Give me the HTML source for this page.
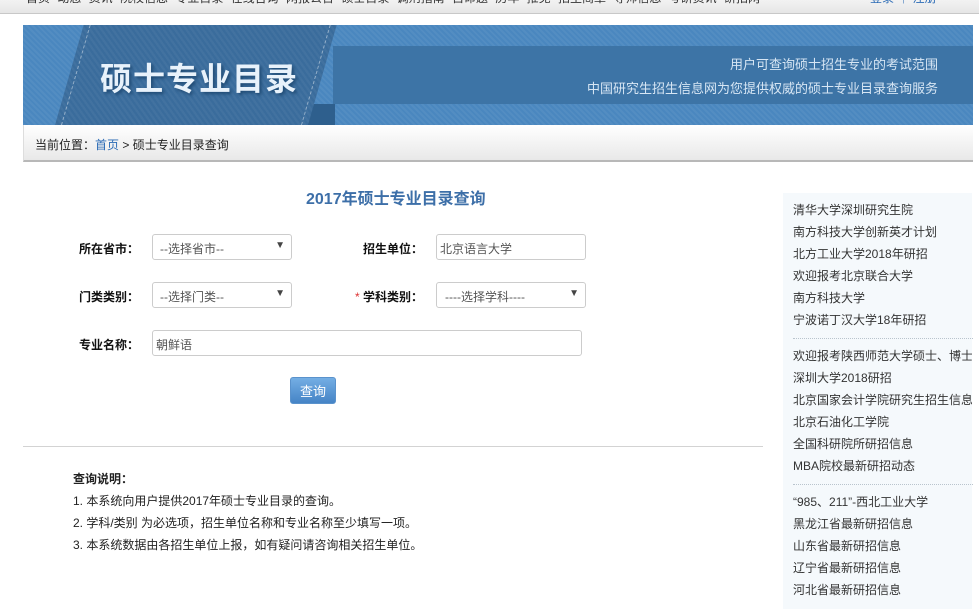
<!DOCTYPE html>
<html><head><meta charset="utf-8">
<style>
*{margin:0;padding:0;box-sizing:border-box}
body{width:979px;height:609px;overflow:hidden;background:#fff;font-family:"Liberation Sans","Noto Sans CJK SC",sans-serif;font-size:12px;color:#333;position:relative}
.top{position:absolute;left:0;top:0;width:979px;height:14px;background:linear-gradient(#f2f2f2,#e6e6e6);border-bottom:1px solid #c8c8c8;overflow:hidden}
.top .nav{position:absolute;left:26px;top:-11px;font-size:12px;color:#333;white-space:nowrap;word-spacing:4px}
.top .r{position:absolute;left:870px;top:-11px;color:#2a6ab5;white-space:nowrap}
.banner{position:absolute;left:23px;top:25px;width:950px;height:100px;background:#4a87bf;overflow:hidden;
background-image:repeating-linear-gradient(45deg,rgba(255,255,255,.05) 0 2px,transparent 2px 4px)}
.band{position:absolute;left:310px;top:21px;width:640px;height:58px;background:#3d74a6}
.rib{position:absolute;left:32px;top:0;width:253px;height:100px;background:#3a6c9c;transform:skewX(-16deg);transform-origin:0 100%;
background-image:repeating-linear-gradient(45deg,rgba(255,255,255,.04) 0 2px,transparent 2px 4px)}
.rib:before,.rib:after{content:"";position:absolute;top:0;bottom:0;border-left:1px dashed rgba(255,255,255,.45)}
.rib:before{left:6px}.rib:after{right:6px}
.shadow{position:absolute;left:284px;top:79px;width:28px;height:21px;background:#2e5f8d}
.title{position:absolute;left:77px;top:29px;font-size:32px;font-weight:bold;color:#e8f2fb;text-shadow:2px 2px 3px #1f4a73;letter-spacing:1px}
.sub{position:absolute;right:35px;color:#d7e6f4;font-size:13px;text-align:right}
.crumb{position:absolute;left:23px;top:125px;width:950px;height:37px;background:linear-gradient(#fff,#e8e8e8);border-bottom:2px solid #b8b8b8;border-left:1px solid #ddd;padding:11px 0 0 11px;font-size:12px;color:#222}
.crumb a{color:#2a6ab5;text-decoration:none}
h2{position:absolute;left:306px;top:185px;font-size:16px;color:#3d6fa8;font-weight:bold}
.lab{position:absolute;font-weight:bold;font-size:12px;color:#111}
.sel,.inp{position:absolute;height:26px;border:1px solid #ccc;border-radius:3px;background:#fff;padding:5px 0 0 7px;color:#555;font-size:12px}
.sel:after{content:"▼";position:absolute;right:6px;top:5px;font-size:10px;color:#444}
.btn{position:absolute;left:290px;top:377px;width:46px;height:27px;border-radius:3px;background:linear-gradient(#74aee4,#4584c6);color:#fff;font-size:13px;text-align:center;line-height:27px;border:1px solid #5a92cc}
.hr{position:absolute;left:23px;top:446px;width:740px;height:1px;background:#d3d3d3}
.note{position:absolute;left:73px;top:468px;font-size:12px;line-height:22px;color:#222}
.side{position:absolute;left:783px;top:193px;width:189px;height:416px;background:#f5f9fc;padding-left:10px}
.side div{font-size:12px;line-height:22px;color:#333;white-space:nowrap;overflow:hidden}
.side .sep{height:1px;border-top:1px dotted #b9c4cd;margin:7px 0 6px;width:180px}
</style></head><body>
<div class="top"><div class="nav">首页 动态 资讯 院校信息 专业目录 在线咨询 网报公告 硕士目录 调剂指南 自命题 历年 推免 招生简章 导师信息 考研资讯 研招网</div><div class="r">登录 ｜ 注册</div></div>
<div class="banner">
<div class="band"></div><div class="shadow"></div><div class="rib"></div>
<div class="title">硕士专业目录</div>
<div class="sub" style="top:29px">用户可查询硕士招生专业的考试范围</div>
<div class="sub" style="top:53px">中国研究生招生信息网为您提供权威的硕士专业目录查询服务</div>
</div>
<div class="crumb">当前位置：<a>首页</a> &gt; 硕士专业目录查询</div>
<h2>2017年硕士专业目录查询</h2>
<div class="lab" style="left:79px;top:240px">所在省市：</div>
<div class="sel" style="left:152px;top:234px;width:140px">--选择省市--</div>
<div class="lab" style="left:363px;top:240px">招生单位：</div>
<div class="inp" style="left:436px;top:234px;width:150px;padding-left:3px">北京语言大学</div>
<div class="lab" style="left:79px;top:288px">门类类别：</div>
<div class="sel" style="left:152px;top:282px;width:140px">--选择门类--</div>
<div class="lab" style="left:355px;top:288px"><span style="color:#d33;font-weight:normal">*</span> 学科类别：</div>
<div class="sel" style="left:436px;top:282px;width:150px;padding-left:8px">----选择学科----</div>
<div class="lab" style="left:79px;top:336px">专业名称：</div>
<div class="inp" style="left:152px;top:330px;width:430px;padding-left:3px">朝鲜语</div>
<div class="btn">查询</div>
<div class="hr"></div>
<div class="note"><b>查询说明：</b><br>1. 本系统向用户提供2017年硕士专业目录的查询。<br>2. 学科/类别 为必选项，招生单位名称和专业名称至少填写一项。<br>3. 本系统数据由各招生单位上报，如有疑问请咨询相关招生单位。</div>
<div class="side" style="padding-top:6px">
<div>清华大学深圳研究生院</div><div>南方科技大学创新英才计划</div><div>北方工业大学2018年研招</div><div>欢迎报考北京联合大学</div><div>南方科技大学</div><div>宁波诺丁汉大学18年研招</div>
<div class="sep"></div>
<div>欢迎报考陕西师范大学硕士、博士</div><div>深圳大学2018研招</div><div>北京国家会计学院研究生招生信息</div><div>北京石油化工学院</div><div>全国科研院所研招信息</div><div>MBA院校最新研招动态</div>
<div class="sep" style="margin-bottom:6px"></div>
<div>“985、211”-西北工业大学</div><div>黑龙江省最新研招信息</div><div>山东省最新研招信息</div><div>辽宁省最新研招信息</div><div>河北省最新研招信息</div>
</div>
</body></html>
